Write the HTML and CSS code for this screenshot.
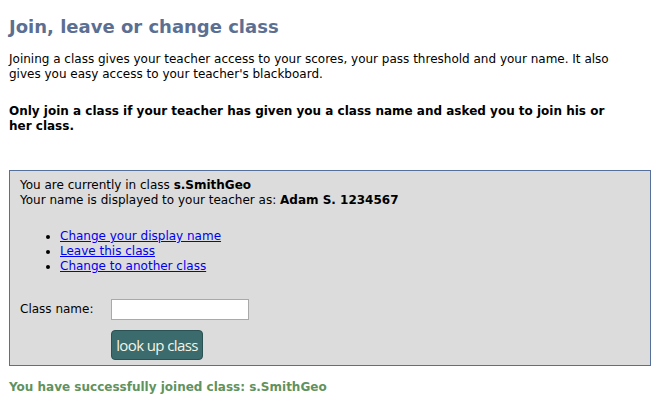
FILE: index.html
```html
<!DOCTYPE html>
<html lang="en">
<head>
    <meta charset="utf-8">
    <title>Join, leave or change class</title>
    <meta name="viewport" content="width=device-width, initial-scale=1">
    <link rel="stylesheet" href="styles.css">
</head>
<body>
    <h1 class="title">Join, leave or change class</h1>
    <p class="intro">Joining a class gives your teacher access to your scores, your pass threshold and your name. It also gives you easy access to your teacher's blackboard.</p>
    <p class="warning">Only join a class if your teacher has given you a class name and asked you to join his or her class.</p>

    <div class="classBox">
        <p class="status">You are currently in class <b>s.SmithGeo</b><br>Your name is displayed to your teacher as: <b>Adam S. 1234567</b></p>
        <ul class="actions">
            <li><a href="#">Change your display name</a></li>
            <li><a href="#">Leave this class</a></li>
            <li><a href="#">Change to another class</a></li>
        </ul>
        <form class="lookup" onsubmit="return false">
            <label for="className">Class name:</label>
            <input type="text" id="className">
            <button type="submit" class="lookupButton">look up class</button>
        </form>
    </div>

    <p class="success">You have successfully joined class: s.SmithGeo</p>
</body>
</html>
```

FILE: styles.css
```css
body{
    font-family: "DejaVu Sans", Verdana, sans-serif;
    font-size: 12px;
    line-height: 15px;
    color: #000;
    background-color: #fff;
    margin: 0;
    padding: 16px 19px 0 9px;
}
.title{
    font-size: 18px;
    line-height: 22px;
    font-weight: bold;
    color: #5b6f93;
    margin: 0 0 14px 0;
}
.intro, .warning{
    max-width: 600px;
}
.intro{
    margin: 0 0 22px 0;
}
.warning{
    font-weight: bold;
    margin: 0 0 36px 0;
}
.classBox{
    background-color: #dcdcdc;
    border: 1px solid #55709a;
    padding: 7px 10px 5px 10px;
}
.status{
    margin: 0 0 21px 0;
}
.actions{
    margin: 0 0 25px 0;
    padding-left: 40px;
}
.actions a{
    color: #0000ee;
}
.lookup{
    display: grid;
    grid-template-columns: 91px auto;
    justify-content: start;
    align-items: center;
    row-gap: 10px;
}
.lookup input{
    width: 138px;
    height: 21px;
    box-sizing: border-box;
    border: 1px solid #a9a9a9;
    background-color: #fff;
    margin: 0;
}
.lookupButton{
    grid-column: 2;
    width: 92px;
    height: 30px;
    box-sizing: border-box;
    background-color: #3b6b6c;
    border: 1px solid #2b5152;
    border-radius: 4px;
    color: #f4f4e6;
    font-family: "Open Sans", sans-serif;
    font-size: 15px;
    letter-spacing: -0.6px;
    padding: 0;
    cursor: pointer;
}
.success{
    font-weight: bold;
    color: #61925d;
    margin: 14px 0 0 0;
}
```
